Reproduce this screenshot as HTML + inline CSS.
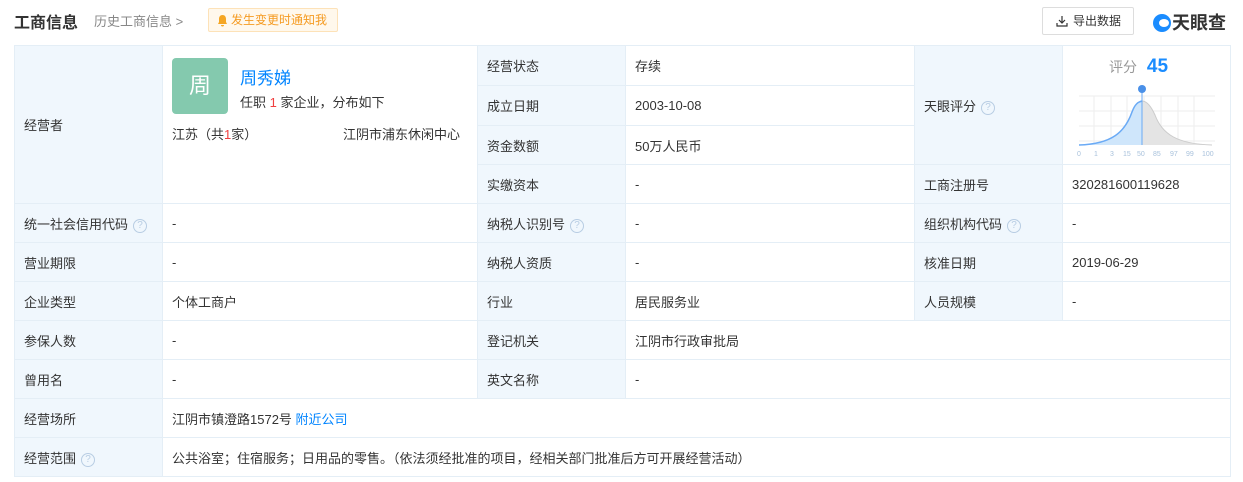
<!DOCTYPE html>
<html><head><meta charset="utf-8"><style>
*{margin:0;padding:0;box-sizing:border-box}
body{width:1243px;height:482px;background:#fff;font-family:"Liberation Sans","Noto Sans CJK SC",sans-serif;font-size:13px;color:#333;position:relative;overflow:hidden}
.title{position:absolute;left:14px;top:9px;font-size:16px;font-weight:bold;color:#333}
.hist{position:absolute;left:94px;top:11px;font-size:13px;color:#888}
.notify{position:absolute;left:208px;top:8px;width:130px;height:24px;border:1px solid #fde2b8;background:#fff8ec;border-radius:2px;color:#f59b22;font-size:12px;line-height:22px;padding-left:22px}
.notify svg{position:absolute;left:8px;top:5px}
.export{position:absolute;left:1042px;top:7px;width:92px;height:28px;border:1px solid #ddd;border-radius:2px;font-size:12px;line-height:26px;padding-left:30px;color:#333}
.export svg{position:absolute;left:13px;top:7px}
.logo{position:absolute;left:1153px;top:9px;font-size:18px;font-weight:bold;color:#333;letter-spacing:0}
.logo i{display:inline-block;width:18px;height:18px;border-radius:50%;background:#1a8cff;vertical-align:-3px;margin-right:1px;position:relative}
.logo i:after{content:"";position:absolute;left:6px;top:5px;width:10px;height:8px;border-radius:50%;background:#fff}
table{position:absolute;left:14px;top:45px;border-collapse:collapse;table-layout:fixed;width:1216px}
td{border:1px solid #e4eef6;padding:0 9px;height:39px;vertical-align:middle}
td.l{background:#f0f7fd}
.q{display:inline-block;width:14px;height:14px;border:1px solid #b8cde3;border-radius:50%;color:#b8cde3;font-size:10px;line-height:12px;text-align:center;vertical-align:1px;margin-left:5px}
a{color:#0084ff;text-decoration:none}
</style></head><body>
<div class="title">工商信息</div>
<div class="hist">历史工商信息 &gt;</div>
<div class="notify"><svg width="11" height="13" viewBox="0 0 11 13"><path d="M5.5 1C3.3 1 2 2.7 2 5v3L1 10h9L9 8V5C9 2.7 7.700 1 5.5 1zM4 11h3a1.5 1.5 0 0 1-3 0z" fill="#f5a623"/></svg>发生变更时通知我</div>
<div class="export"><svg width="12" height="12" viewBox="0 0 12 12" fill="none" stroke="#333" stroke-width="1.2"><path d="M6 1v7M3 5l3 3 3-3M1 8v3h10V8"/></svg>导出数据</div>
<div class="logo"><i></i>天眼查</div>
<table>
<colgroup><col style="width:148px"><col style="width:315px"><col style="width:148px"><col style="width:289px"><col style="width:148px"><col style="width:168px"></colgroup>
<tr><td class="l" rowspan="4">经营者</td>
<td rowspan="4" style="vertical-align:top;padding:12px 8px 0 9px;position:relative">
<div style="position:absolute;left:9px;top:12px;width:56px;height:56px;background:#84c9ae;border-radius:4px;color:#fff;font-size:22px;text-align:center;line-height:56px">周</div>
<div style="position:absolute;left:77px;top:18px;font-size:17px;color:#0084ff">周秀娣</div>
<div style="position:absolute;left:77px;top:46px">任职 <span style="color:#f04040">1</span> 家企业，分布如下</div>
<div style="position:absolute;left:9px;top:78px">江苏（共<span style="color:#f04040">1</span>家）</div>
<div style="position:absolute;left:180px;top:78px">江阴市浦东休闲中心</div>
</td>
<td class="l" style="height:40px">经营状态</td><td>存续</td>
<td class="l" rowspan="3">天眼评分<span class="q">?</span></td>
<td rowspan="3" style="position:relative;padding:0">
<div style="position:absolute;left:46px;top:10px;font-size:14px;color:#999">评分 <b style="color:#1a8cff;font-size:19px;margin-left:6px">45</b></div>
<svg style="position:absolute;left:14px;top:36px" width="140" height="76" viewBox="0 0 140 76">
<g stroke="#eee" stroke-width="1"><path d="M2 14H138M2 29H138M2 44H138M2 59H138M17 14V63M34 14V63M50 14V63M67 14V63M84 14V63M101 14V63M117 14V63"/></g>
<path d="M2 63 C35 62,48 50,55 30 C58 22,61 20,65 19 L65 63Z" fill="#cfe6fb"/>
<path d="M65 19 C70 19,74 24,78 33 C85 52,100 62,135 63 L65 63Z" fill="#e4e4e4"/>
<path d="M2 63 C35 62,48 50,55 30 C58 22,61 20,65 19" stroke="#6aaaf5" fill="none" stroke-width="1.5"/>
<path d="M65 19 C70 19,74 24,78 33 C85 52,100 62,135 63" stroke="#ccc" fill="none"/>
<path d="M65 10V63" stroke="#6aaaf5"/>
<circle cx="65" cy="7" r="4" fill="#4a90e8"/>
<g fill="#a9c2dc" font-size="7" font-family="Liberation Sans"><text x="0" y="74">0</text><text x="17" y="74">1</text><text x="33" y="74">3</text><text x="46" y="74">15</text><text x="60" y="74">50</text><text x="76" y="74">85</text><text x="93" y="74">97</text><text x="109" y="74">99</text><text x="125" y="74">100</text></g>
</svg></td></tr>
<tr><td class="l" style="height:40px">成立日期</td><td>2003-10-08</td></tr>
<tr><td class="l">资金数额</td><td>50万人民币</td></tr>
<tr><td class="l">实缴资本</td><td>-</td><td class="l">工商注册号</td><td>320281600119628</td></tr>
<tr><td class="l">统一社会信用代码<span class="q">?</span></td><td>-</td><td class="l">纳税人识别号<span class="q">?</span></td><td>-</td><td class="l">组织机构代码<span class="q">?</span></td><td>-</td></tr>
<tr><td class="l">营业期限</td><td>-</td><td class="l">纳税人资质</td><td>-</td><td class="l">核准日期</td><td>2019-06-29</td></tr>
<tr><td class="l">企业类型</td><td>个体工商户</td><td class="l">行业</td><td>居民服务业</td><td class="l">人员规模</td><td>-</td></tr>
<tr><td class="l">参保人数</td><td>-</td><td class="l">登记机关</td><td colspan="3">江阴市行政审批局</td></tr>
<tr><td class="l">曾用名</td><td>-</td><td class="l">英文名称</td><td colspan="3">-</td></tr>
<tr><td class="l">经营场所</td><td colspan="5">江阴市镇澄路1572号 <a>附近公司</a></td></tr>
<tr><td class="l">经营范围<span class="q">?</span></td><td colspan="5">公共浴室；住宿服务；日用品的零售。（依法须经批准的项目，经相关部门批准后方可开展经营活动）</td></tr>
</table>
</body></html>
